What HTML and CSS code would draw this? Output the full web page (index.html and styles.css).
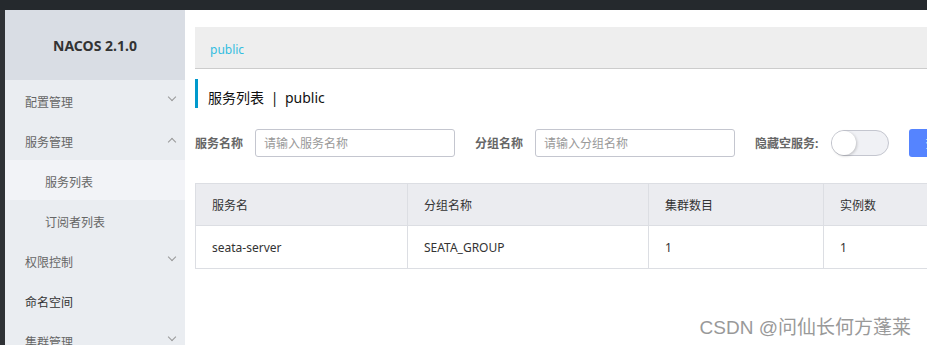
FILE: index.html
```html
<!DOCTYPE html>
<html lang="zh-CN">
<head>
  <meta charset="UTF-8" />
  <title>Nacos</title>
  <link rel="stylesheet" href="styles.css">
</head>
<body>
  <div class="topbar"></div>
  <div class="layout">
    <div class="edge"></div>
    <aside class="sidebar">
      <div class="brand">NACOS 2.1.0</div>
      <ul class="menu">
        <li class="menu-item">配置管理<span class="arrow down"></span></li>
        <li class="menu-item">服务管理<span class="arrow up"></span></li>
        <li class="menu-item sub active">服务列表</li>
        <li class="menu-item sub">订阅者列表</li>
        <li class="menu-item">权限控制<span class="arrow down"></span></li>
        <li class="menu-item plain">命名空间</li>
        <li class="menu-item">集群管理<span class="arrow down"></span></li>
      </ul>
    </aside>

    <main class="main">
      <div class="breadcrumb"><a href="#">public</a></div>

      <h3 class="page-title">服务列表 <span class="sep">|</span> public</h3>

      <div class="filters">
        <label class="f-label">服务名称</label>
        <input class="f-input" type="text" placeholder="请输入服务名称">
        <label class="f-label">分组名称</label>
        <input class="f-input" type="text" placeholder="请输入分组名称">
        <label class="f-label">隐藏空服务:</label>
        <span class="switch"><span class="knob"></span></span>
        <button class="btn">查询</button>
      </div>

      <table class="grid">
        <thead>
          <tr>
            <th class="c1">服务名</th>
            <th class="c2">分组名称</th>
            <th class="c3">集群数目</th>
            <th class="c4">实例数</th>
          </tr>
        </thead>
        <tbody>
          <tr>
            <td>seata-server</td>
            <td>SEATA_GROUP</td>
            <td>1</td>
            <td>1</td>
          </tr>
        </tbody>
      </table>
    </main>
  </div>
  <div class="watermark">CSDN @问仙长何方蓬莱</div>
</body>
</html>
```

FILE: styles.css
```css
* {
  box-sizing: border-box;
  margin: 0;
  padding: 0;
}

html, body {
  height: 100%;
  overflow: hidden;
  font-family: "Noto Sans", "Noto Sans CJK SC", sans-serif;
  font-size: 12px;
  color: #333;
  background: #fff;
}

.topbar {
  height: 10px;
  background: #25292d;
}

.layout {
  display: flex;
  height: calc(100% - 10px);
  overflow: hidden;
}

.edge {
  width: 5px;
  background: #2f3236;
}

.sidebar {
  width: 180px;
  background: #eaedf1;
  flex-shrink: 0;
  overflow: hidden;
}

.brand {
  height: 70px;
  background: #d9dde4;
  display: flex;
  align-items: center;
  justify-content: center;
  font-size: 14px;
  font-weight: 700;
  color: #333;
}

.menu {
  list-style: none;
}

.menu-item {
  position: relative;
  height: 40px;
  line-height: 45px;
  padding-left: 20px;
  font-size: 12px;
  color: #666;
}

.menu-item.sub {
  padding-left: 40px;
}

.menu-item.active {
  background: #f2f3f7;
}

.menu-item.plain {
  color: #333;
}

.arrow {
  position: absolute;
  right: 10px;
  width: 6px;
  height: 6px;
  border-right: 1px solid #999;
  border-bottom: 1px solid #999;
}

.arrow.down {
  transform: rotate(45deg);
  top: 14px;
}

.arrow.up {
  transform: rotate(-135deg);
  top: 19px;
}

.main {
  flex: 1;
  padding: 17px 0 0 10px;
  overflow: hidden;
}

.breadcrumb {
  height: 42px;
  line-height: 46px;
  background: #eee;
  border-bottom: 1px solid #ccc;
  padding-left: 15px;
}

.breadcrumb a {
  color: #33bde0;
  text-decoration: none;
  font-size: 12px;
}

.page-title {
  margin-top: 10px;
  height: 29px;
  line-height: 29px;
  padding-top: 4px;
  border-left: 3px solid #09c;
  padding-left: 10px;
  font-size: 14px;
  font-weight: 400;
  color: #111;
}

.page-title .sep {
  margin: 0 3px;
}

.filters {
  display: flex;
  align-items: center;
  margin-top: 21px;
  height: 28px;
  white-space: nowrap;
}

.f-label {
  font-weight: 700;
  color: #666;
  margin-right: 12px;
}

.f-input {
  width: 200px;
  height: 28px;
  border: 1px solid #c4c6cf;
  border-radius: 3px;
  padding: 0 8px;
  font-family: inherit;
  font-size: 12px;
  margin-right: 20px;
  flex-shrink: 0;
}

.f-input::placeholder {
  color: #999;
}

.switch {
  position: relative;
  width: 58px;
  height: 26px;
  border: 1px solid #c4c6cf;
  border-radius: 13px;
  background: #f0f1f5;
  flex-shrink: 0;
  margin-left: 1px;
  margin-right: 20px;
}

.knob {
  position: absolute;
  left: 0;
  top: 0;
  width: 24px;
  height: 24px;
  border-radius: 50%;
  background: #fff;
  box-shadow: 1px 1px 3px rgba(0, 0, 0, 0.2);
}

.btn {
  flex-shrink: 0;
  height: 28px;
  padding: 0 16px;
  border: none;
  border-radius: 3px;
  background: #5584ff;
  color: #fff;
  font-family: inherit;
  font-size: 12px;
}

.grid {
  margin-top: 26px;
  border-collapse: collapse;
  width: 860px;
  table-layout: fixed;
}

.grid th, .grid td {
  border: 1px solid #dcdee3;
  text-align: left;
  padding: 0 16px;
  font-weight: 400;
  color: #333;
}

.grid th {
  height: 42px;
  background: #ebecf0;
}

.grid td {
  height: 43px;
}

.c1 { width: 212px; }
.c2 { width: 241px; }
.c3 { width: 175px; }
.c4 { width: 232px; }

.watermark {
  position: absolute;
  right: 16px;
  bottom: 6px;
  font-family: "Liberation Sans", "Noto Sans CJK SC", sans-serif;
  font-size: 19px;
  color: #999;
}
```
